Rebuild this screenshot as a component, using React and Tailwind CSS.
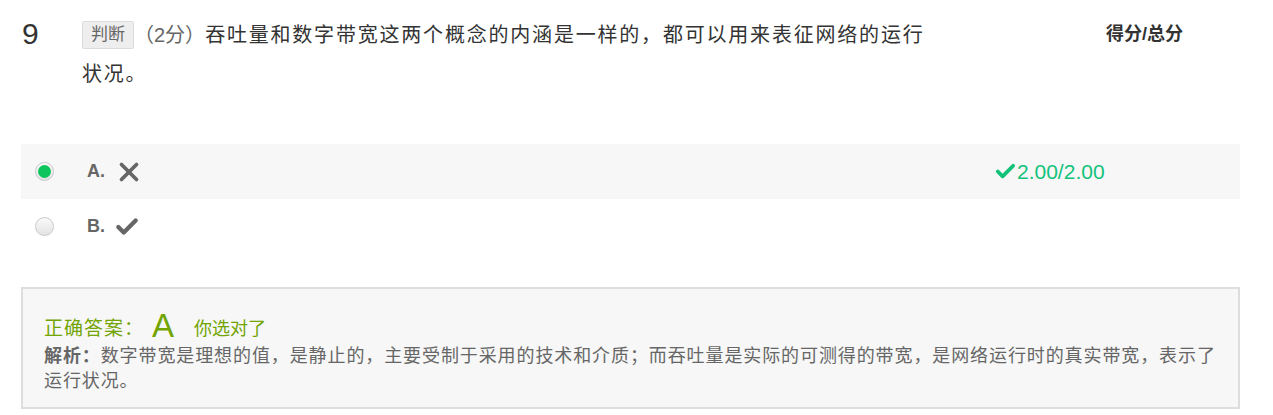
import { Check, X } from "lucide-react"

const cjk = "font-['Liberation_Sans','Noto_Sans_CJK_SC',sans-serif]"

function Radio({ checked }) {
    return (
        <span className="w-[19px] h-[19px] rounded-full border border-[#c9c9c9] bg-gradient-to-b from-[#fafafa] to-[#e3e3e3] flex items-center justify-center shrink-0">
            {checked && <span className="w-[13px] h-[13px] rounded-full bg-[#0dc55c]" />}
        </span>
    )
}

function OptionRow({ label, icon, active, score }) {
    return (
        <div className={`flex items-center h-[55px] pl-[14px] ${active ? "bg-[#f7f7f7]" : ""}`}>
            <Radio checked={active} />
            <span className="ml-[33px] text-[18px] font-bold text-[#666]">{label}</span>
            <span className="ml-[9px] text-[#666]">{icon}</span>
            <div className="flex-1" />
            {score && (
                <div className="w-[246px] flex items-center text-[21px] text-[#12c27a]">
                    <Check size={23} strokeWidth={4} />
                    <span>{score}</span>
                </div>
            )}
        </div>
    )
}

export default function App() {
    return (
        <div className={`w-[1273px] h-[415px] bg-white pl-[21px] pr-[33px] text-[#333] ${cjk}`}>
            {/* Question header */}
            <div className="flex pt-[16px]">
                <div className="w-[61px] text-[30px] leading-[36px] pl-[1px] text-[#333]">9</div>
                <div className="w-[852px] text-[20px] leading-[39px] tracking-[1.8px] text-[#333]">
                    <span className="inline-block align-[2px] px-[8px] h-[28px] leading-[26px] text-[17px] tracking-normal text-[#666] bg-[#eee] border border-[#dcdcdc] rounded-[2px]">判断</span>
                    <span className="tracking-normal text-[#666]">（2分）</span>
                    吞吐量和数字带宽这两个概念的内涵是一样的，都可以用来表征网络的运行状况。
                </div>
                <div className="flex-1" />
                <div className="w-[134px] text-[18px] font-bold leading-[36px] text-[#333]">得分/总分</div>
            </div>

            {/* Options */}
            <div className="mt-[50px]">
                <OptionRow label="A." active icon={<X size={30} strokeWidth={3} />} score="2.00/2.00" />
                <OptionRow label="B." icon={<Check size={26} strokeWidth={4} />} />
            </div>

            {/* Answer */}
            <div className="mt-[33px] border-2 border-[#dddddd] bg-[#f7f7f7] px-[21px] pt-[20px] pb-[13px]">
                <div className="flex items-end text-[#72a402] leading-none">
                    <span className="text-[19px] tracking-[1px] mb-[4px]">正确答案：</span>
                    <span className="text-[33px] ml-[8px]">A</span>
                    <span className="text-[18px] ml-[20px] mb-[4px]">你选对了</span>
                </div>
                <p className="mt-[2px] text-[18px] leading-[25px] tracking-[0.9px] text-[#666]">
                    <span className="font-bold">解析：</span>数字带宽是理想的值，是静止的，主要受制于采用的技术和介质；而吞吐量是实际的可测得的带宽，是网络运行时的真实带宽，表示了运行状况。
                </p>
            </div>
        </div>
    )
}
